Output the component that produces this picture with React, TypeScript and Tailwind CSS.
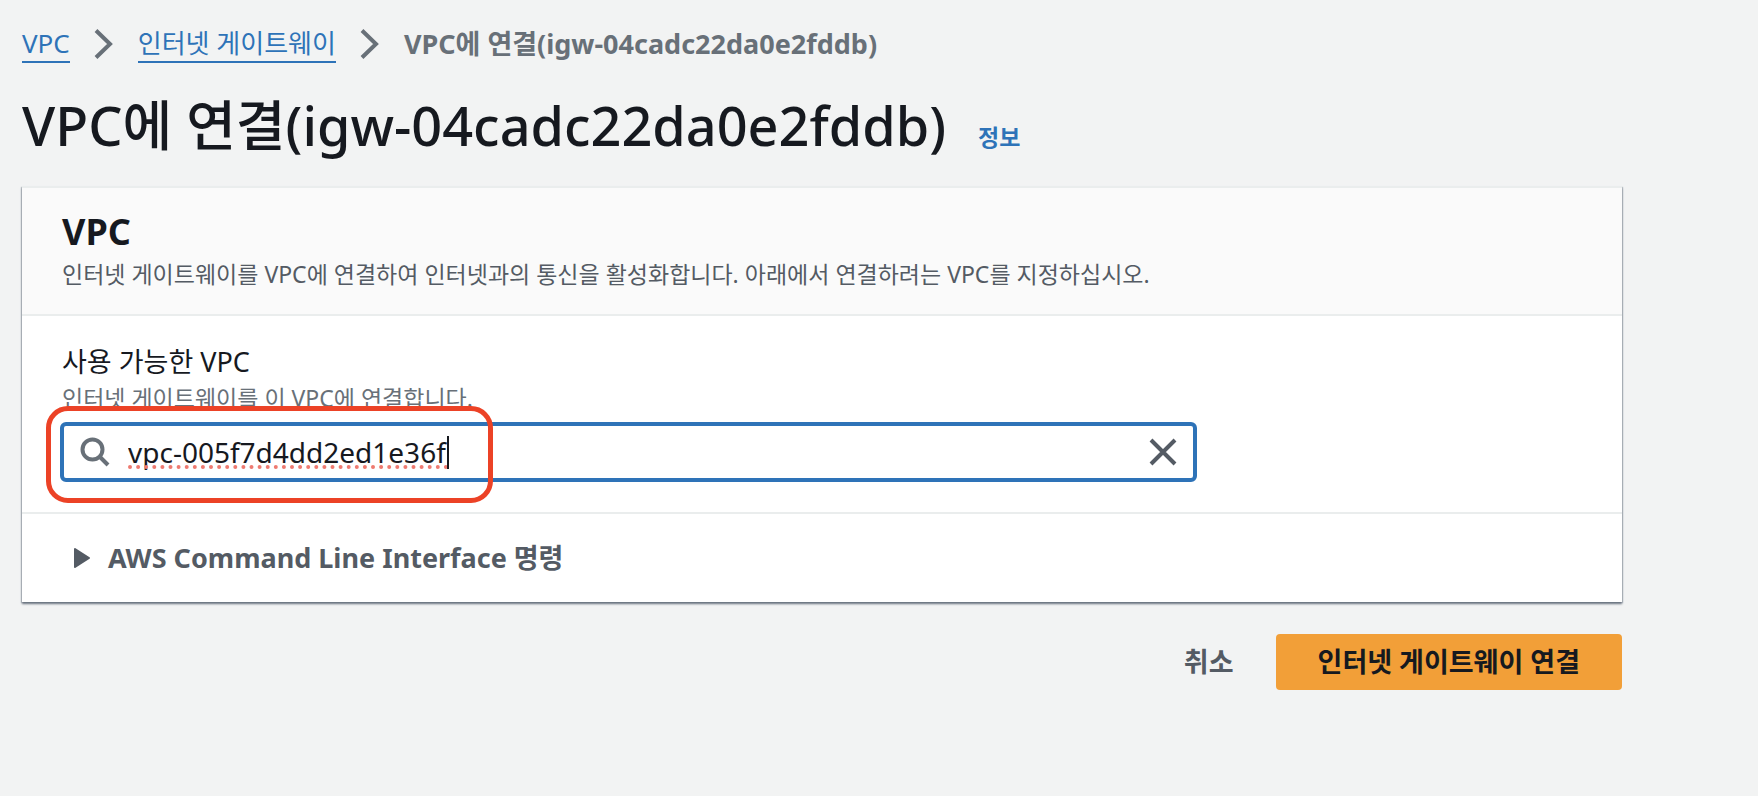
import type { ReactNode } from 'react'

const gatewayId = 'igw-04cadc22da0e2fddb'

function BreadcrumbLink({ children }: { children: ReactNode }) {
  return (
    <a href="#" className="border-b-2 border-[#2e73b8] text-[26px] leading-9 text-[#2e73b8]">
      {children}
    </a>
  )
}

function Chevron() {
  return (
    <svg width="20" height="32" viewBox="0 0 20 32" fill="none" className="shrink-0" aria-hidden="true">
      <path d="M2 2.5 L16 16 L2 29.5" stroke="#687078" strokeWidth="4" />
    </svg>
  )
}

function Breadcrumbs() {
  return (
    <nav aria-label="breadcrumb" className="flex items-center gap-6">
      <BreadcrumbLink>VPC</BreadcrumbLink>
      <Chevron />
      <BreadcrumbLink>인터넷 게이트웨이</BreadcrumbLink>
      <Chevron />
      <span className="text-[27px] leading-9 font-bold text-[#687078]">VPC에 연결({gatewayId})</span>
    </nav>
  )
}

function VpcSearch() {
  return (
    <div className="relative w-3/4 pr-1.5">
      <div className="flex h-[60px] items-center rounded-md border-4 border-[#2e73b8] bg-white px-4">
        <svg width="30" height="30" viewBox="0 0 30 30" fill="none" className="shrink-0" aria-hidden="true">
          <circle cx="12.5" cy="12.5" r="10" stroke="#687078" strokeWidth="4" />
          <path d="M19.5 19.5 L28 28" stroke="#687078" strokeWidth="4" />
        </svg>
        <div className="relative ml-[18px] grow">
          <input
            id="vpc-search"
            type="text"
            defaultValue="vpc-005f7d4dd2ed1e36f"
            spellCheck={false}
            className="block w-full bg-transparent text-[28px] leading-10 text-[#16191f] outline-none"
          />
          {/* spelling underline and caret */}
          <svg width="322" height="36" viewBox="0 0 322 36" className="pointer-events-none absolute left-0 top-1" aria-hidden="true">
            <path d="M2 31 H318" stroke="#ee7a70" strokeWidth="4" strokeLinecap="round" strokeDasharray="0 8.1" />
            <path d="M320 0 V33" stroke="#16191f" strokeWidth="2" />
          </svg>
        </div>
        <button type="button" aria-label="지우기" className="shrink-0">
          <svg width="28" height="28" viewBox="0 0 28 28" fill="none" aria-hidden="true">
            <path d="M2 2 L26 26 M26 2 L2 26" stroke="#545b64" strokeWidth="4" />
          </svg>
        </button>
      </div>
      <div className="pointer-events-none absolute -left-[14px] -top-4 h-[97px] w-[447px] rounded-[22px] border-5 border-[#ec4226]" />
    </div>
  )
}

export default function App() {
  return (
    <main className="min-h-screen bg-[#f2f3f3] pt-[25px] pr-[136px] pl-[22px] font-['Noto_Sans','Noto_Sans_CJK_KR',sans-serif] text-[#16191f]">
      <Breadcrumbs />

      <header className="mt-[22px] flex items-baseline gap-8">
        <h1 className="text-[54px] leading-[80px] font-medium">VPC에 연결({gatewayId})</h1>
        <a href="#" className="text-[23px] font-bold text-[#2e73b8]">
          정보
        </a>
      </header>

      <section className="mt-[21px] bg-white shadow-[0_2px_2px_0_#6b7480,1px_1px_1px_0_#c5c9cd,-1px_1px_1px_0_#c5c9cd]">
        <div className="border-y-2 border-[#eaeded] bg-[#fafafa] px-10 pt-6 pb-[22px]">
          <h2 className="mb-1 text-[36px] leading-10 font-bold">VPC</h2>
          <p className="text-[23px] leading-9 text-[#545b64]">
            인터넷 게이트웨이를 VPC에 연결하여 인터넷과의 통신을 활성화합니다. 아래에서 연결하려는 VPC를 지정하십시오.
          </p>
        </div>

        <div className="px-[38px] pt-7 pb-[30px]">
          <div className="mb-1.5 px-0.5">
            <label htmlFor="vpc-search" className="block text-[27px] leading-9">
              사용 가능한 VPC
            </label>
            <p className="text-[23px] leading-9 text-[#687078]">인터넷 게이트웨이를 이 VPC에 연결합니다.</p>
          </div>
          <VpcSearch />
        </div>

        <div className="border-t-2 border-[#eaeded] px-[52px] py-6">
          <button type="button" className="flex items-center gap-4 text-[27px] leading-10 font-bold text-[#545b64]">
            <svg width="18" height="22" viewBox="0 0 18 22" aria-hidden="true">
              <path d="M1 2 L15 11 L1 20 Z" fill="#545b64" stroke="#545b64" strokeWidth="2" strokeLinejoin="round" />
            </svg>
            AWS Command Line Interface 명령
          </button>
        </div>
      </section>

      <div className="mt-8 flex justify-end text-[27px] leading-10 font-bold">
        <button type="button" className="px-[42px] py-2 text-[#545b64]">
          취소
        </button>
        <button type="button" className="rounded bg-[#f29f38] px-[42px] py-2">
          인터넷 게이트웨이 연결
        </button>
      </div>
    </main>
  )
}
